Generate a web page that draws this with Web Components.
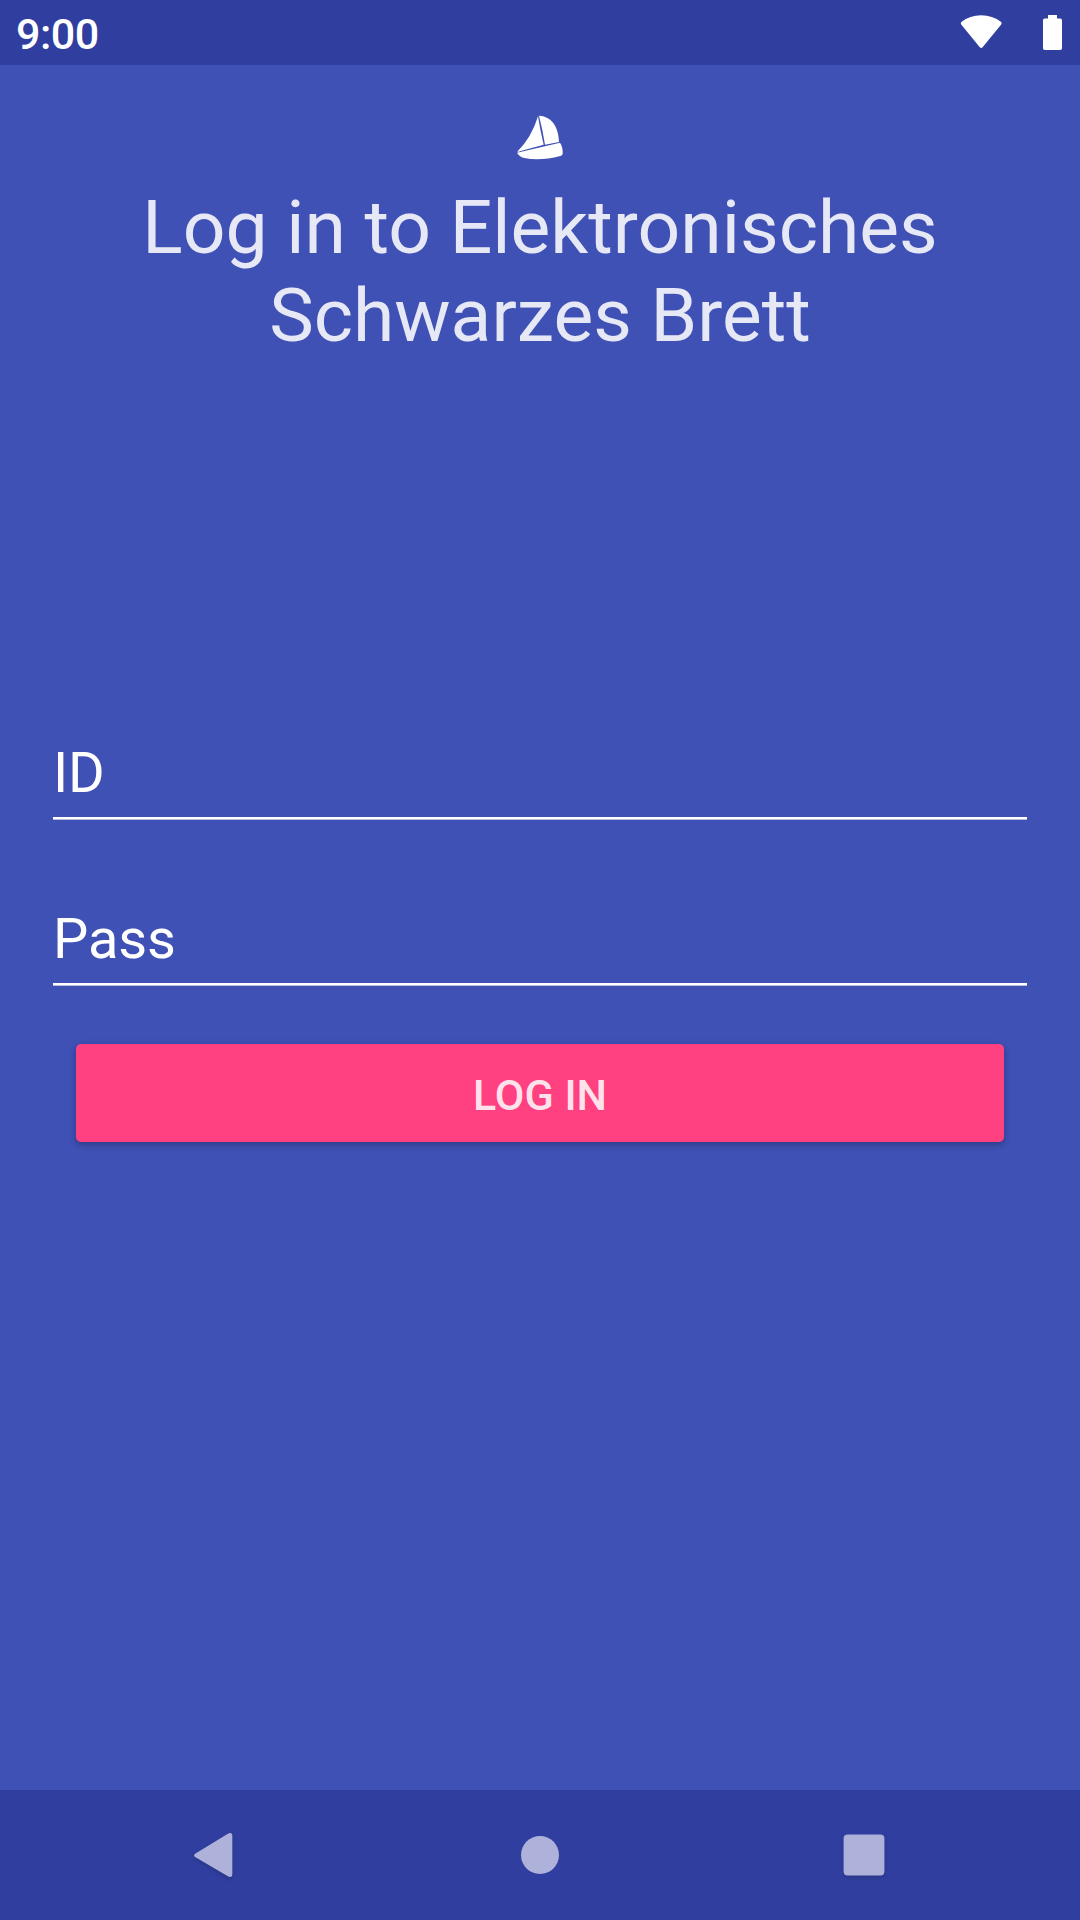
<!DOCTYPE html>
<html lang="en">
<head>
<meta charset="utf-8">
<title>Log in</title>
<style>
html,body{margin:0;height:100%}
body{font-family:Roboto,sans-serif;background:#3f51b5;overflow:hidden}
</style>
</head>
<body>
<login-screen></login-screen>
<script>
const define = (name, html) => customElements.define(name, class extends HTMLElement {
  constructor() {
    super();
    this.attachShadow({ mode: 'open' }).innerHTML = html;
  }
});

define('status-bar', `
<style>
:host{display:flex;justify-content:space-between;height:65px;flex:none;background:#303f9f;color:#fff}
.time{padding:3px 0 0 16px;font-size:43px;line-height:62px;font-weight:500;letter-spacing:-.5px}
svg{display:block}
</style>
<div class="time"><slot></slot></div>
<svg width="140" height="65" viewBox="0 0 140 65" fill="#fff">
  <path d="M21.2 24.6Q20 22.8 21.7 21.7Q29.8 15.2 41.2 15.2Q52.6 15.2 60.8 21.7Q62.5 22.8 61.2 24.6L42.8 47Q41.2 49 39.6 47Z"/>
  <path d="M108 15h9v3.5h3.3q1.7 0 1.7 1.7v28.1q0 1.7-1.7 1.7h-15.6q-1.7 0-1.7-1.7V20.2q0-1.7 1.7-1.7h3.3z"/>
</svg>`);

define('boat-logo', `
<style>:host{display:block;width:80px;height:80px}svg{display:block}</style>
<svg width="80" height="80" viewBox="0 0 240 240" fill="#fff">
  <path d="M114 49Q120 88 131 134L51 156Q95 113 114 49Z"/>
  <path d="M117 47C151 48 176 76 177 126L135 134Q128 89 117 47Z"/>
  <path d="M51 158L180 128Q189 141 188 162Q187 167 181 168Q120 184 73 174Q57 170 51 158Z"/>
</svg>`);

define('text-field', `
<style>
:host{display:block;margin:0 53px}
.value{height:77px;font-size:56px;line-height:66px;letter-spacing:-.15px;color:#fff}
.line{height:3px;background:linear-gradient(#fff 2px,#b9bfe2 2px)}
</style>
<div class="value"><slot></slot></div><div class="line"></div>`);

define('raised-button', `
<style>
:host{display:block}
button{display:block;width:100%;height:98px;border:0;border-radius:5px;margin:0;padding:4px 0 0;background:#ff4081;color:rgba(255,255,255,.87);font:500 43px/94px Roboto,sans-serif;text-align:center;box-shadow:0 3px 6px rgba(0,0,0,.2),0 1px 9px rgba(0,0,0,.10)}
</style>
<button><slot></slot></button>`);

define('nav-bar', `
<style>
:host{display:flex;justify-content:center;align-items:center;height:130px;flex:none;background:#303f9f}
svg{display:block;width:324px;height:130px;filter:drop-shadow(0 2px 2px rgba(0,0,0,.16))}
</style>
<svg viewBox="54 0 324 130"><path d="M195.5 63.5L228.3 43.5Q232.3 42 232.3 46V84Q232.3 88 228.3 86.5L195.5 67.3Q192.6 65.4 195.5 63.5Z" fill="#aeb2da"/></svg>
<svg viewBox="378 0 324 130" style="filter:none"><circle cx="540" cy="65" r="19" fill="#aeb2da"/></svg>
<svg viewBox="702 0 324 130"><rect x="843.6" y="44.6" width="40.8" height="40.8" rx="4" fill="#aeb2da"/></svg>`);

define('login-screen', `
<style>
:host{display:flex;flex-direction:column;width:1080px;height:1920px;background:#3f51b5}
main{flex:1;display:flex;flex-direction:column}
boat-logo{margin:35px auto 0}
h1{margin:3px 0 0;height:176px;font-weight:400;font-size:75px;line-height:88px;text-align:center;color:rgba(255,255,255,.87)}
.first{margin-top:381px}
.second{margin-top:86px}
raised-button{margin:58px 76px 0}
</style>
<status-bar>9:00</status-bar>
<main>
  <boat-logo></boat-logo>
  <h1>Log in to Elektronisches<br>Schwarzes Brett</h1>
  <text-field class="first">ID</text-field>
  <text-field class="second">Pass</text-field>
  <raised-button>LOG IN</raised-button>
</main>
<nav-bar></nav-bar>`);
</script>
</body>
</html>
